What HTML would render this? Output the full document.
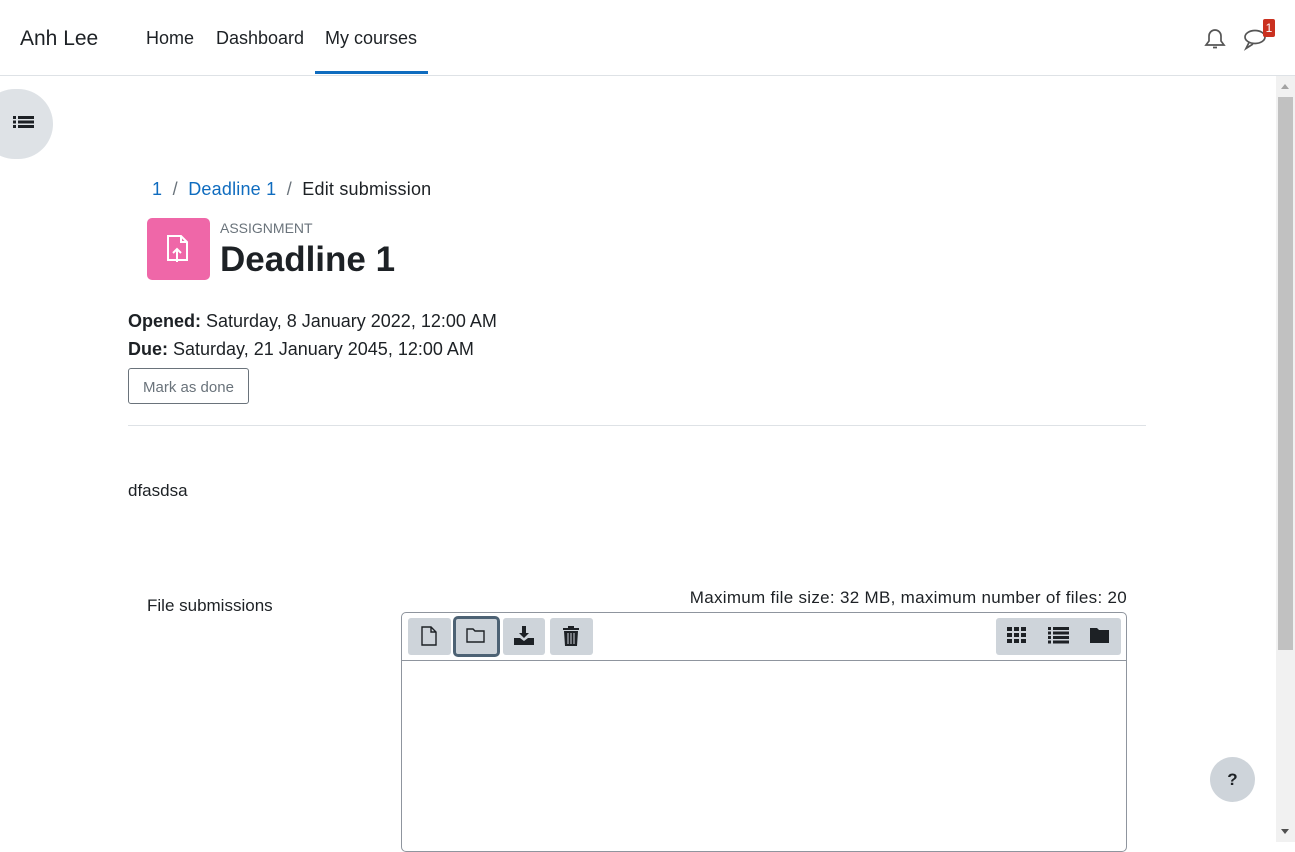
<!DOCTYPE html>
<html><head><style>
*{box-sizing:border-box;margin:0;padding:0}
body{width:1295px;height:842px;overflow:hidden;font-family:"Liberation Sans",sans-serif;color:#1d2125;background:#fff;position:relative;font-size:17px}
.nav{position:absolute;left:0;top:0;width:1295px;height:76px;border-bottom:1px solid #dee2e6;background:#fff}
.nav span{position:absolute;top:28px;font-size:18px}
.sb{position:absolute;right:0;top:76px;width:19px;height:766px;background:#f1f1f1}
.thumb{position:absolute;left:2px;top:21px;width:15px;height:553px;background:#c1c1c1}
.btn{position:absolute;top:618px;height:37px;background:#ced4da;border-radius:3px}
</style></head><body>
<div class="nav">
<span style="left:20px;font-size:21px;top:27px">Anh Lee</span>
<span style="left:146px">Home</span>
<span style="left:216px">Dashboard</span>
<span style="left:325px">My courses</span>
<div style="position:absolute;left:315px;top:71px;width:113px;height:3px;background:#0f6cbf"></div>
<svg style="position:absolute;left:1203px;top:26px" width="24" height="25" viewBox="0 0 24 25" fill="none" stroke="#555" stroke-width="1.7"><path d="M3 19h18l-3-4V10a6 6 0 0 0-12 0v5z M10 21.5h4"/></svg>
<svg style="position:absolute;left:1242px;top:27px" width="26" height="24" viewBox="0 0 26 24" fill="none" stroke="#555" stroke-width="1.7"><ellipse cx="13" cy="10" rx="10" ry="6.5"/><path d="M7 15.5l-3 6 7-4.5"/></svg>
<div style="position:absolute;left:1263px;top:19px;width:12px;height:18px;background:#ca3120;color:#fff;font-size:12px;text-align:center;line-height:18px;border-radius:2px">1</div>
</div>
<div style="position:absolute;left:-20px;top:89px;width:73px;height:70px;border-radius:35px;background:#dee2e6"></div>
<svg style="position:absolute;left:13px;top:115px" width="21" height="17" viewBox="0 0 21 17" fill="#1d2125"><rect x="0" y="1" width="3" height="3"/><rect x="5" y="1" width="16" height="3"/><rect x="0" y="5.5" width="3" height="3"/><rect x="5" y="5.5" width="16" height="3"/><rect x="0" y="10" width="3" height="3"/><rect x="5" y="10" width="16" height="3"/></svg>
<div class="sb"><div style="position:absolute;left:5px;top:8px;border:4px solid transparent;border-bottom:5px solid #a3a3a3;border-top:0"></div><div class="thumb"></div><div style="position:absolute;left:5px;bottom:8px;border:4px solid transparent;border-top:5px solid #505050;border-bottom:0"></div></div>
<div style="position:absolute;left:152px;top:179px;font-size:18px;letter-spacing:0.2px"><span style="color:#0f6cbf">1</span> <span style="color:#6a737b">&nbsp;/&nbsp;</span> <span style="color:#0f6cbf">Deadline 1</span> <span style="color:#6a737b">&nbsp;/&nbsp;</span> Edit submission</div>
<div style="position:absolute;left:147px;top:218px;width:63px;height:62px;background:#ef67a8;border-radius:5px"></div>
<svg style="position:absolute;left:165px;top:234px" width="26" height="30" viewBox="0 0 26 30" fill="none" stroke="#fff" stroke-width="2"><path d="M3 2h13l6 6v18H3z M16 2v6h6 M12 28V15 M8 19l4-4 4 4"/></svg>
<div style="position:absolute;left:220px;top:220px;font-size:14px;color:#6a737b">ASSIGNMENT</div>
<div style="position:absolute;left:220px;top:240px;font-size:35px;font-weight:bold">Deadline 1</div>
<div style="position:absolute;left:128px;top:307px;font-size:18px;line-height:28px"><b>Opened:</b> Saturday, 8 January 2022, 12:00 AM<br><b>Due:</b> Saturday, 21 January 2045, 12:00 AM</div>
<div style="position:absolute;left:128px;top:368px;width:121px;height:36px;border:1px solid #6a737b;border-radius:3px;font-size:15px;color:#6a737b;text-align:center;line-height:38px">Mark as done</div>
<div style="position:absolute;left:128px;top:425px;width:1018px;height:1px;background:#dee2e6"></div>
<div style="position:absolute;left:128px;top:481px;font-size:17px">dfasdsa</div>
<div style="position:absolute;left:147px;top:596px;font-size:17px">File submissions</div>
<div style="position:absolute;right:168px;top:588px;font-size:17px;letter-spacing:0.3px">Maximum file size: 32 MB, maximum number of files: 20</div>
<div style="position:absolute;left:401px;top:612px;width:726px;height:240px;border:1px solid #8f959e;border-radius:5px"></div>
<div style="position:absolute;left:402px;top:660px;width:724px;height:1px;background:#8f959e"></div>
<div class="btn" style="left:408px;width:43px"></div>
<svg style="position:absolute;left:420px;top:625px" width="18" height="22" viewBox="0 0 18 22" fill="none" stroke="#1d2125" stroke-width="1.4"><path d="M2 2h9l5 5v13H2z M11 2v5h5"/></svg>
<div class="btn" style="left:453px;width:47px;border:3px solid #4d6274;top:616px;height:41px;border-radius:5px"></div>
<svg style="position:absolute;left:466px;top:627px" width="20" height="17" viewBox="0 0 20 17" fill="none" stroke="#1d2125" stroke-width="1.4"><path d="M1 2h6l2 2h9v11H1z"/></svg>
<div class="btn" style="left:503px;width:42px"></div>
<svg style="position:absolute;left:514px;top:626px" width="20" height="20" viewBox="0 0 20 20" fill="#1d2125"><path d="M8 0h4v7h3l-5 5-5-5h3z M0 12h6l4 3 4-3h6v7H0z"/></svg>
<div class="btn" style="left:550px;width:43px"></div>
<svg style="position:absolute;left:563px;top:626px" width="16" height="20" viewBox="0 0 16 20" fill="#1d2125"><path d="M5 0h6v2h5v2H0V2h5z M1 5h14l-1 15H2z"/><path d="M5 7v11M8 7v11M11 7v11" stroke="#ced4da" stroke-width="1"/></svg>
<div class="btn" style="left:996px;width:125px"></div>
<svg style="position:absolute;left:1007px;top:627px" width="20" height="16" viewBox="0 0 20 16" fill="#1d2125"><rect x="0" y="0" width="5" height="4"/><rect x="7" y="0" width="5" height="4"/><rect x="14" y="0" width="5" height="4"/><rect x="0" y="6" width="5" height="4"/><rect x="7" y="6" width="5" height="4"/><rect x="14" y="6" width="5" height="4"/><rect x="0" y="12" width="5" height="4"/><rect x="7" y="12" width="5" height="4"/><rect x="14" y="12" width="5" height="4"/></svg>
<svg style="position:absolute;left:1048px;top:627px" width="21" height="17" viewBox="0 0 21 17" fill="#1d2125"><rect x="0" y="0" width="3" height="3"/><rect x="5" y="0" width="16" height="3"/><rect x="0" y="4.5" width="3" height="3"/><rect x="5" y="4.5" width="16" height="3"/><rect x="0" y="9" width="3" height="3"/><rect x="5" y="9" width="16" height="3"/><rect x="0" y="13.5" width="3" height="3"/><rect x="5" y="13.5" width="16" height="3"/></svg>
<svg style="position:absolute;left:1090px;top:627px" width="20" height="17" viewBox="0 0 20 17" fill="#1d2125"><path d="M0 1h7l2 2h10v13H0z"/></svg>
<div style="position:absolute;left:1210px;top:757px;width:45px;height:45px;border-radius:50%;background:#ced4da;text-align:center;line-height:45px;font-weight:bold;font-size:17px">?</div>
</body></html>
